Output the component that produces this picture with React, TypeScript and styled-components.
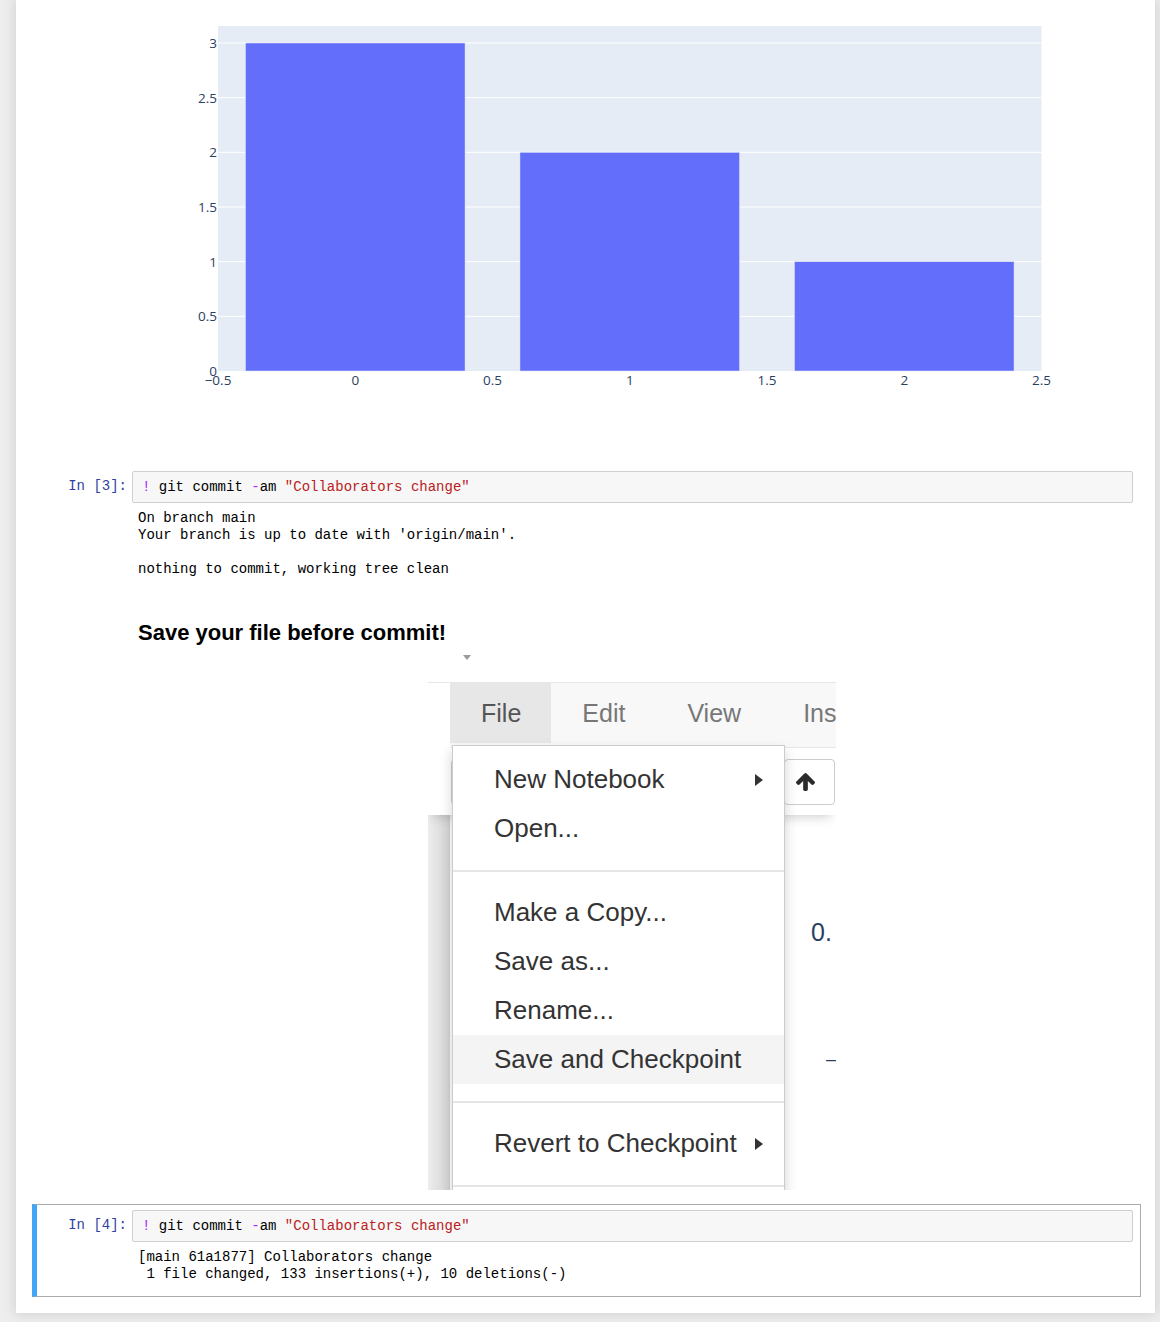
import React from "react";
import styled, { createGlobalStyle } from "styled-components";

const GlobalStyle = createGlobalStyle`
  html, body { margin: 0; padding: 0; background: #eeeeee; }
  body { font-family: "Liberation Sans", Arial, sans-serif; min-height: 1322px; }
  * { box-sizing: border-box; }
`;

const MONO = `"Liberation Mono", "Courier New", monospace`;

const Page = styled.div`
  padding-left: 16px;
  padding-bottom: 9px;
`;

const Notebook = styled.div`
  width: 1139px;
  background: #ffffff;
  box-shadow: 0 0 12px 1px rgba(87, 87, 87, 0.2);
  padding: 0 14px 16px 16px;
`;

const Cell = styled.div<{ $selected?: boolean; $flushTop?: boolean }>`
  width: 1109px;
  border: 1px solid ${(p) => (p.$selected ? "#ababab" : "transparent")};
  border-left: ${(p) => (p.$selected ? "5px solid #42a5f5" : "1px solid transparent")};
  padding: 5px 7px 5px ${(p) => (p.$selected ? "1px" : "5px")};
  ${(p) => (p.$flushTop ? "border-top: 0; padding-top: 0;" : "")}
`;

const Row = styled.div`
  display: flex;
  align-items: flex-start;
`;

const Prompt = styled.div`
  flex: none;
  width: 94px;
  height: 32px;
  padding-right: 5px;
  text-align: right;
  font-family: ${MONO};
  font-size: 14px;
  line-height: 31px;
  color: #303f9f;
  white-space: pre;
`;

const InputArea = styled.div`
  flex: 1;
  border: 1px solid #cfcfcf;
  border-radius: 2px;
  background: #f7f7f7;
  padding: 6px 9px;
  font-family: ${MONO};
  font-size: 14px;
  line-height: 18px;
  color: #000;
  white-space: pre;
`;

const Magic = styled.span`
  color: #aa22ff;
`;

const Str = styled.span`
  color: #ba2121;
`;

const OutputArea = styled.pre`
  margin: 0 0 0 94px;
  padding: 7px 0 8px 6px;
  font-family: ${MONO};
  font-size: 14px;
  line-height: 17px;
  color: #000;
  white-space: pre;
`;

const ChartArea = styled.div`
  margin-left: 94px;
  height: 459px;
`;

const Markdown = styled.div`
  margin-left: 94px;
  padding: 0 7px 0 6px;
`;

const Heading = styled.h4`
  margin: 22px 0 0;
  font-family: "Liberation Sans", Helvetica, Arial, sans-serif;
  font-size: 22px;
  line-height: 26px;
  font-weight: bold;
  color: #000;
`;

const ImageRow = styled.div`
  display: flex;
  justify-content: center;
  margin: 2px 0 8px;
`;

/* ---------- embedded screenshot ---------- */

const Shot = styled.div`
  position: relative;
  width: 408px;
  height: 542px;
  overflow: hidden;
  background: #fff;
  display: flex;
  flex-direction: column;
  font-family: "Liberation Sans", Helvetica, Arial, sans-serif;
`;

const ShotTop = styled.div`
  flex: none;
  height: 34px;
  padding: 7px 0 0 35px;
`;

const Caret = styled.div`
  width: 0;
  height: 0;
  border-left: 4px solid transparent;
  border-right: 4px solid transparent;
  border-top: 5px solid #9a9a9a;
`;

const Header = styled.div`
  flex: none;
  position: relative;
  z-index: 1;
  background: #fff;
  box-shadow: 0 7px 10px -5px rgba(87, 87, 87, 0.28);
`;

const MenuRow = styled.div`
  display: flex;
  border-top: 1px solid #e7e7e7;
`;

const MenuPad = styled.div`
  flex: none;
  width: 22px;
`;

const MenuBar = styled.div`
  flex: 1;
  display: flex;
  background: #f8f8f8;
  border-bottom: 1px solid #e7e7e7;
  padding-bottom: 4px;
`;

const Tab = styled.div<{ $active?: boolean }>`
  flex: none;
  padding: 0 ${(p) => (p.$active ? "30px 0 31px" : "31px")};
  height: 60px;
  line-height: 60px;
  font-size: 25px;
  color: ${(p) => (p.$active ? "#555" : "#777")};
  background: ${(p) => (p.$active ? "#e7e7e7" : "transparent")};
  white-space: nowrap;
`;

const Toolbar = styled.div`
  display: flex;
  align-items: flex-start;
  height: 67px;
  padding-top: 11px;
`;

const ToolButton = styled.div<{ $wide?: boolean }>`
  flex: none;
  height: 46px;
  width: ${(p) => (p.$wide ? "80px" : "51px")};
  margin-left: ${(p) => (p.$wide ? "23px" : "auto")};
  margin-right: ${(p) => (p.$wide ? "0" : "1px")};
  padding-right: ${(p) => (p.$wide ? "0" : "8px")};
  border: 1px solid #cccccc;
  border-radius: 4px;
  background: #fff;
  display: flex;
  align-items: center;
  justify-content: center;
  color: #333;
`;

const Site = styled.div`
  flex: 1;
  display: flex;
`;

const Gutter = styled.div`
  flex: none;
  width: 22px;
  background: linear-gradient(to right, #ededed, #d3d3d3);
`;

const SiteContainer = styled.div`
  flex: 1;
  background: #fff;
  padding-top: 102px;
  display: flex;
  flex-direction: column;
  color: #2a3f5f;
`;

const OutNum = styled.div<{ $indent: number; $gap: number; $size: number }>`
  margin-left: ${(p) => p.$indent}px;
  margin-top: ${(p) => p.$gap}px;
  font-size: ${(p) => p.$size}px;
  line-height: 30px;
  white-space: nowrap;
`;

const Dropdown = styled.div`
  position: absolute;
  z-index: 2;
  left: 24px;
  top: 97px;
  width: 333px;
  background: #fff;
  border: 1px solid rgba(0, 0, 0, 0.2);
  box-shadow: 0 6px 12px rgba(0, 0, 0, 0.175);
  padding: 9px 0 20px;
`;

const Item = styled.div<{ $hover?: boolean }>`
  position: relative;
  height: 49px;
  line-height: 49px;
  padding-left: 41px;
  font-size: 26px;
  color: #333;
  white-space: nowrap;
  background: ${(p) => (p.$hover ? "#f4f4f4" : "transparent")};
`;

const SubArrow = styled.span`
  position: absolute;
  right: 21px;
  top: 50%;
  margin-top: -6px;
  width: 0;
  height: 0;
  border-top: 6px solid transparent;
  border-bottom: 6px solid transparent;
  border-left: 8px solid #333;
`;

const Divider = styled.div`
  height: 2px;
  background: #e5e5e5;
  margin: 17px 0 16px;
`;

const ArrowUpIcon: React.FC = () => (
  <svg width={19} height={18} viewBox="117 192 1558 1472" aria-hidden="true">
    <path
      fill="#2b2b2b"
      d="M1675 971q0 51-37 90l-75 75q-38 38-91 38-54 0-90-38l-294-293v704q0 52-37.5 84.5t-90.5 32.5h-128q-53 0-90.5-32.5t-37.5-84.5v-704l-294 293q-36 38-90 38t-90-38l-75-75q-38-38-38-90 0-53 38-91l651-651q35-37 90-37 54 0 91 37l651 651q37 39 37 91z"
    />
  </svg>
);

/* ---------- chart ---------- */

const PX0 = 86;
const PW = 823.5;
const PY0 = 26;
const PYB = 371;
const xOf = (v: number) => PX0 + ((v + 0.5) * PW) / 3;
const yOf = (v: number) => PYB - (v * (PYB - 43)) / 3;

const bars = [
  { x: 0, y: 3 },
  { x: 1, y: 2 },
  { x: 2, y: 1 },
];
const yTicks = [0, 0.5, 1, 1.5, 2, 2.5, 3];
const xTicks: [number, string][] = [
  [-0.5, "\u22120.5"],
  [0, "0"],
  [0.5, "0.5"],
  [1, "1"],
  [1.5, "1.5"],
  [2, "2"],
  [2.5, "2.5"],
];

const BarChart: React.FC = () => (
  <svg width={1003} height={459} style={{ display: "block" }}>
    <rect x={PX0} y={PY0} width={PW} height={PYB - PY0} fill="#e5ecf6" />
    {yTicks
      .filter((v) => v > 0)
      .map((v) => (
        <line key={v} x1={PX0} x2={PX0 + PW} y1={yOf(v)} y2={yOf(v)} stroke="#ffffff" strokeWidth={1} />
      ))}
    {bars.map((b) => (
      <rect
        key={b.x}
        x={xOf(b.x - 0.4)}
        y={yOf(b.y)}
        width={xOf(b.x + 0.4) - xOf(b.x - 0.4)}
        height={PYB - yOf(b.y)}
        fill="#636efa"
        stroke="#e5ecf6"
        strokeWidth={0.5}
      />
    ))}
    <g fontFamily='"Open Sans", Verdana, Arial, sans-serif' fontSize={13.5} fill="#2a3f5f">
      {yTicks.map((v) => (
        <text key={v} x={PX0 - 1} y={yOf(v)} textAnchor="end" dominantBaseline="central">
          {String(v)}
        </text>
      ))}
      {xTicks.map(([v, label]) => (
        <text key={v} x={xOf(v)} y={380} textAnchor="middle" dominantBaseline="central">
          {label}
        </text>
      ))}
    </g>
  </svg>
);

const Screenshot: React.FC = () => (
  <Shot>
    <ShotTop>
      <Caret />
    </ShotTop>
    <Header>
      <MenuRow>
        <MenuPad />
        <MenuBar>
          <Tab $active>File</Tab>
          <Tab>Edit</Tab>
          <Tab>View</Tab>
          <Tab>Ins</Tab>
        </MenuBar>
      </MenuRow>
      <Toolbar>
        <ToolButton $wide />
        <ToolButton>
          <ArrowUpIcon />
        </ToolButton>
      </Toolbar>
    </Header>
    <Site>
      <Gutter />
      <SiteContainer>
        <OutNum $indent={361} $gap={0} $size={25}>0.</OutNum>
        <OutNum $indent={376} $gap={97} $size={18}>–</OutNum>
      </SiteContainer>
    </Site>
    <Dropdown>
      <Item>
        New Notebook
        <SubArrow />
      </Item>
      <Item>Open...</Item>
      <Divider />
      <Item>Make a Copy...</Item>
      <Item>Save as...</Item>
      <Item>Rename...</Item>
      <Item $hover>Save and Checkpoint</Item>
      <Divider />
      <Item>
        Revert to Checkpoint
        <SubArrow />
      </Item>
      <Divider />
    </Dropdown>
  </Shot>
);

const CommitInput: React.FC = () => (
  <InputArea>
    <Magic>!</Magic> git commit <Magic>-</Magic>am <Str>"Collaborators change"</Str>
  </InputArea>
);

export default function App() {
  return (
    <>
      <GlobalStyle />
      <Page>
        <Notebook>
          <Cell $flushTop>
            <ChartArea>
              <BarChart />
            </ChartArea>
          </Cell>

          <Cell>
            <Row>
              <Prompt>In [3]:</Prompt>
              <CommitInput />
            </Row>
            <OutputArea>{`On branch main
Your branch is up to date with 'origin/main'.

nothing to commit, working tree clean`}</OutputArea>
          </Cell>

          <Cell>
            <Markdown>
              <Heading>Save your file before commit!</Heading>
              <ImageRow>
                <Screenshot />
              </ImageRow>
            </Markdown>
          </Cell>

          <Cell $selected>
            <Row>
              <Prompt>In [4]:</Prompt>
              <CommitInput />
            </Row>
            <OutputArea>{`[main 61a1877] Collaborators change
 1 file changed, 133 insertions(+), 10 deletions(-)`}</OutputArea>
          </Cell>
        </Notebook>
      </Page>
    </>
  );
}
